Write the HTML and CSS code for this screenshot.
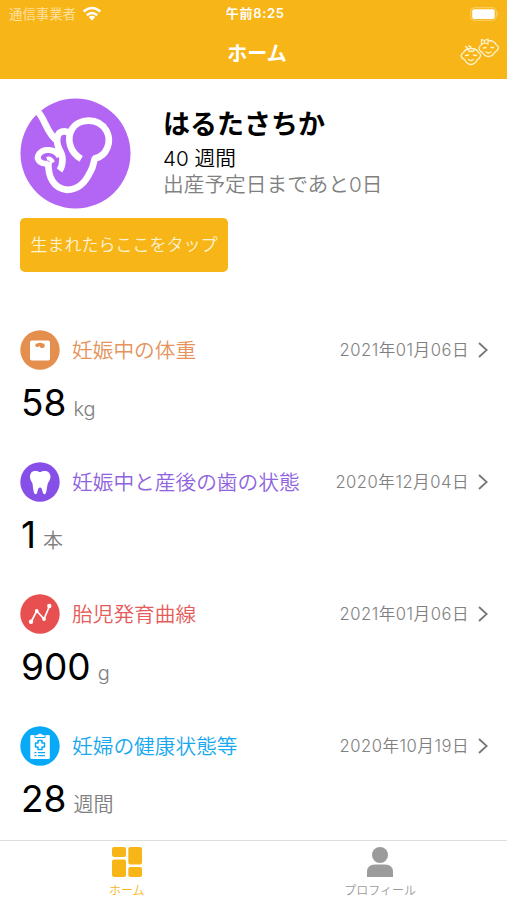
FILE: index.html
```html
<!DOCTYPE html>
<html lang="ja">
<head>
<meta charset="utf-8">
<meta name="viewport" content="width=device-width, initial-scale=1">
<title>ホーム</title>
<link rel="stylesheet" href="styles.css">
</head>
<body>
<div class="app">
  <header class="header">
    <div class="status">
      <div class="carrier"><span>通信事業者</span>
        <svg width="20" height="16" viewBox="0 0 20 16" fill="none" stroke="#fff" stroke-width="2.6"><path d="M1.6 5.6Q10-1.6 18.4 5.6M4.8 9.2Q10 4.8 15.2 9.2"/><path d="M6.7 11.1Q10 8.6 13.3 11.1L10 14.6Z" fill="#fff" stroke="none"/></svg>
      </div>
      <div class="clock">午前8:25</div>
      <svg class="battery" width="30" height="14" viewBox="0 0 30 14"><rect x=".7" y=".7" width="25.6" height="12.6" rx="3.5" fill="none" stroke="#fbd26d" stroke-width="1"/><rect x="2.2" y="2.3" width="22.5" height="9.6" rx="2" fill="#fff"/><path d="M27.5 4.8Q29.5 7 27.5 9.2Z" fill="#fbd26d"/></svg>
    </div>
    <div class="nav">
      <h1>ホーム</h1>
      <svg class="babies" width="40" height="30" viewBox="0 0 40 30" fill="none" stroke="#fff3d0" stroke-width="1.3" stroke-linecap="round" stroke-linejoin="round"><path d="M3.500 14.500Q5.500 10.500 11 10.500Q16.500 10.500 18.500 14.500Q21 16 20.500 18Q19.500 20.500 17.500 21.500Q15 26.500 11 26.500Q7 26.500 4.500 21.500Q1.500 20.500 1 18Q1 16 3.500 14.500ZM8 10.500L5.500 8.500M11 10.500Q11 8 8.700 8M8 11.500Q9 14.500 11 13Q13 14.500 14.500 11.500M5.500 17.500L8.500 17M13.500 17L16.500 17.500M8.500 21.500Q11 23.500 13.500 21.500"/><path d="M20.500 7.500Q18.500 9 19 11Q20 13.500 22 14Q24.500 18.500 28.500 18.500Q32.500 18.500 35 14Q37.500 13 38.500 10Q38.500 8 36.500 7Q34 2.500 28.500 2.500M21.500 1.500L24.500 2.500L28 1V6L24.500 5L21.500 6.500ZM24.500 2.500V5M23.500 10L26 9.500M31 9.500L33.500 9.500M26 14Q28.500 16 31 14"/></svg>
    </div>
  </header>

  <main class="content">
    <section class="profile">
      <svg class="avatar" width="111" height="111" viewBox="29.500 23.500 333 333"><circle cx="196" cy="190" r="165" fill="#b365f3"/><g fill="none" stroke="#fff" stroke-width="20" stroke-linejoin="round"><path d="M84 65C108 94 110 130 141 151"/><path d="M213 206C178 186 169 145 185 118C204 83 266 81 289 122C307 157 288 196 257 204C250 203 254 224 240 246C227 274 204 299 171 299C131 296 112 260 115 214"/><path d="M183 130C164 119 141 121 141 148C138 175 158 184 157 208Q157 228 148 241"/><path d="M148 200C136 174 99 174 87 191C76 207 88 221 112 221" stroke-width="18"/><path d="M110 206Q121 202 129 217" stroke-width="12"/></g></svg>
      <div class="who">
        <h2>はるたさちか</h2>
        <p class="weeks">40 週間</p>
        <p class="due">出産予定日まであと0日</p>
      </div>
    </section>
    <button class="born">生まれたらここをタップ</button>

    <section class="record weight">
      <div class="row">
        <svg class="icon" width="40" height="40" viewBox="0 0 40 40"><circle cx="20" cy="20" r="19.700" fill="#e58f4f"/><rect x="10" y="10.500" width="20" height="20" rx="1.800" fill="#fff"/><path d="M15 15.500Q16 12.800 20 12.800T25 15.500L23.500 18H21L19 15.800L18.500 17H16.500Z" fill="#e58f4f"/></svg>
        <h3>妊娠中の体重</h3><time>2021年01月06日</time>
        <svg class="chevron" width="10" height="16" viewBox="0 0 10 16"><path d="M1 1L8.700 8L1 15"/></svg>
      </div>
      <p class="value"><strong>58</strong><span>kg</span></p>
    </section>
    <section class="record teeth">
      <div class="row">
        <svg class="icon" width="40" height="40" viewBox="0 0 40 40"><circle cx="20" cy="20" r="19.700" fill="#864fe7"/><path d="M20 10.300C17 8.800 13 8.200 11 11C9 14 10.200 18 12.300 21C13.200 24 13 32.300 15.800 32.300C18 32.300 17 25.500 20 25.500C23 25.500 22 32.300 24.500 32.300C27 32.300 26.500 25 28 21C30.500 17.500 31.500 14 29.200 11C27 8.200 23 8.800 20 10.300Z" fill="#fff"/></svg>
        <h3>妊娠中と産後の歯の状態</h3><time>2020年12月04日</time>
        <svg class="chevron" width="10" height="16" viewBox="0 0 10 16"><path d="M1 1L8.700 8L1 15"/></svg>
      </div>
      <p class="value"><strong>1</strong><span>本</span></p>
    </section>
    <section class="record growth">
      <div class="row">
        <svg class="icon" width="40" height="40" viewBox="0 0 40 40"><circle cx="20" cy="20" r="19.700" fill="#e84f50"/><path d="M11.300 27.500L16.700 17L24 25L29.300 12.500" fill="none" stroke="#fff" stroke-width="1.700"/><g fill="#fff"><circle cx="11" cy="27.700" r="2.200"/><circle cx="16.700" cy="17" r="1.900"/><circle cx="24" cy="25" r="1.900"/><circle cx="29.300" cy="12" r="2.200"/></g></svg>
        <h3>胎児発育曲線</h3><time>2021年01月06日</time>
        <svg class="chevron" width="10" height="16" viewBox="0 0 10 16"><path d="M1 1L8.700 8L1 15"/></svg>
      </div>
      <p class="value"><strong>900</strong><span>g</span></p>
    </section>
    <section class="record health">
      <div class="row">
        <svg class="icon" width="40" height="40" viewBox="0 0 40 40"><circle cx="20" cy="20" r="19.700" fill="#08aaf8"/><rect x="10.300" y="9" width="19.500" height="24" rx="1" fill="#fff"/><path d="M15 8.500H17Q20 5.500 23 8.500H25V11.500H15Z" fill="#fff" stroke="#08aaf8"/><path d="M18 14.500H22V17H24.500V21H22V23.500H18V21H15.500V17H18Z" fill="#fff" stroke="#08aaf8" stroke-width="1.500" stroke-linejoin="round"/><path d="M14.500 26.700H16.500M18 26.700H25M14.500 29.700H16.500M18 29.700H25" stroke="#08aaf8" stroke-width="1.200"/></svg>
        <h3>妊婦の健康状態等</h3><time>2020年10月19日</time>
        <svg class="chevron" width="10" height="16" viewBox="0 0 10 16"><path d="M1 1L8.700 8L1 15"/></svg>
      </div>
      <p class="value"><strong>28</strong><span>週間</span></p>
    </section>
  </main>

  <nav class="tabs">
    <div class="tab active">
      <svg width="30" height="30" viewBox="0 0 30 30" fill="currentColor"><rect width="14" height="10" rx="2"/><rect y="12.500" width="14" height="17.500" rx="2"/><rect x="16.300" width="13.700" height="17.500" rx="2"/><rect x="16.300" y="20" width="13.700" height="10" rx="2"/></svg>
      <span>ホーム</span>
    </div>
    <div class="tab">
      <svg width="30" height="30" viewBox="0 0 30 30" fill="currentColor"><circle cx="15" cy="8" r="8"/><path d="M2 30V25Q2 17.500 10 17.500H20Q28 17.500 28 25V30Z"/></svg>
      <span>プロフィール</span>
    </div>
  </nav>
</div>
</body>
</html>
```
FILE: styles.css
```css
* { box-sizing: border-box; }
body { margin: 0; background: #fff; font-family: Inter, "Noto Sans CJK JP", sans-serif; }
h1, h2, h3, p { margin: 0; font-weight: 400; }
svg { display: block; flex: none; }
.app { width: 507px; height: 900px; display: flex; flex-direction: column; overflow: hidden; }

.header { height: 79px; flex: none; background: #f8b518; color: #fff; }
.status { height: 27px; padding: 0 7px 0 9px; display: grid; grid-template-columns: 1fr auto 1fr; align-items: center; }
.carrier { display: flex; align-items: center; gap: 6px; font-size: 13.4px; line-height: 26px; color: #fde0a0; }
.clock { margin-right: -1.5px; padding-bottom: 1px; font-size: 13px; line-height: 26px; font-weight: 600; letter-spacing: 0.7px; }
.battery { justify-self: end; }
.nav { height: 52px; padding: 0 7px; display: grid; grid-template-columns: 1fr auto 1fr; align-items: center; }
.nav h1 { grid-column: 2; padding: 1px 0 0 7px; font-size: 20px; line-height: 50px; font-weight: 700; }
.babies { justify-self: end; }

.content { flex: 1; min-height: 0; padding: 19px 18px 0 20px; }
.profile { display: flex; height: 111px; }
.avatar { margin-right: 32px; }
.who { padding-top: 8px; }
.who h2 { font-size: 27px; line-height: 38px; font-weight: 700; color: #000; }
.who p { font-size: 20.7px; line-height: 26px; }
.who .weeks { padding-top: 2px; font-weight: 350; color: #000; }
.who .due { color: #808080; font-weight: 350; }
.born { display: block; width: 208px; height: 54px; margin: 9px 0 58px; padding: 0; border: 0; border-radius: 5px; background: #f8b518; color: #fff3d4; font: 350 17px/54px Inter, "Noto Sans CJK JP", sans-serif; }

.record { height: 132px; }
.row { display: flex; align-items: center; height: 40px; }
.row h3 { flex: 1; margin-left: 12px; padding-top: 2px; font-size: 20.7px; line-height: 40px; font-weight: 350; }
.row time { font-size: 16.6px; line-height: 40px; letter-spacing: 0.5px; font-weight: 350; color: #808080; }
.chevron { margin: 0 1px 0 9px; fill: none; stroke: #777; stroke-width: 1.8; }
.value { display: flex; align-items: baseline; gap: 7px; height: 64px; line-height: 65px; padding-left: 1px; }
.value strong { font-size: 37px; font-weight: 380; color: #000; }
.value span { font-size: 20px; font-weight: 350; color: #808080; }
.weight h3 { color: #e5935c; }
.teeth h3 { color: #8f63e0; }
.growth h3 { color: #e55b5a; }
.health h3 { color: #18a8f0; }

.tabs { height: 60px; flex: none; display: flex; border-top: 1px solid #dedede; background: #fff; }
.tab { flex: 1; padding-top: 6px; display: flex; flex-direction: column; align-items: center; color: #9b9b9b; font-size: 12px; line-height: 28px; }
.tab span { font-weight: 350; height: 22px; }
.active { color: #f8b518; }
```
